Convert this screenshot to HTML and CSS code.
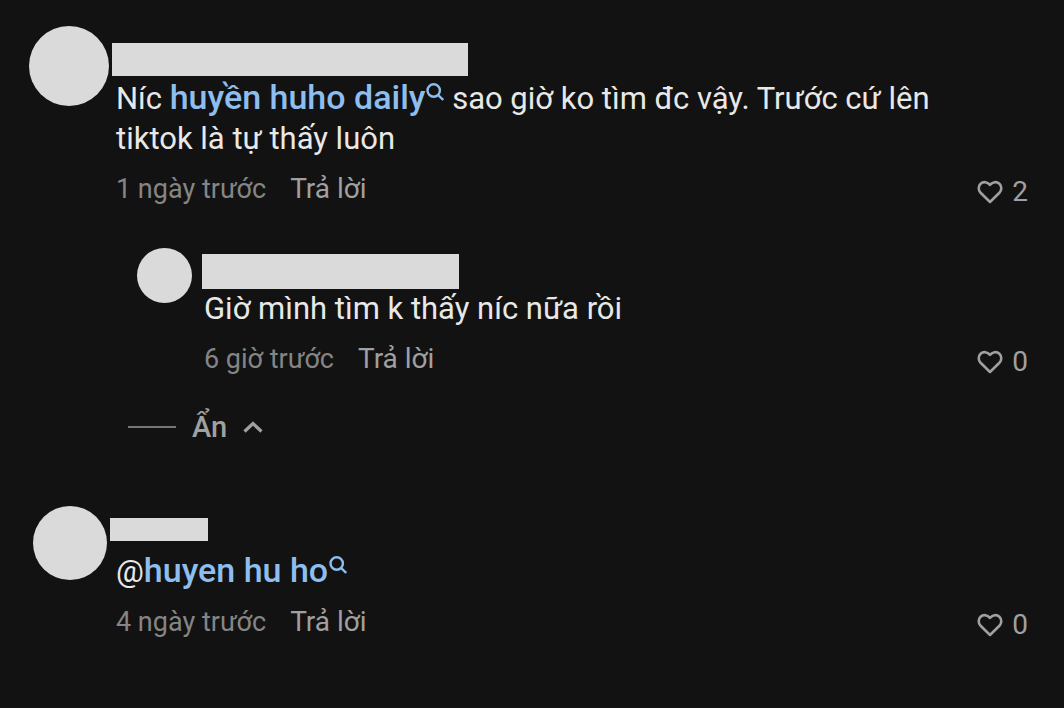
FILE: index.html
```html
<!DOCTYPE html>
<html lang="vi">
<head>
<meta charset="utf-8">
<meta name="viewport" content="width=device-width, initial-scale=1">
<title>Bình luận</title>
<link rel="stylesheet" href="styles.css">
</head>
<body>
<svg class="sprite" aria-hidden="true">
  <symbol id="search" viewBox="0 0 18 18">
    <circle cx="7.7" cy="7.5" r="6.2"/>
    <path d="M12.2 12.2 17.200 17"/>
  </symbol>
  <symbol id="heart" viewBox="0 0 26 24">
    <path d="M13 22 3.600 12.800C1.100 10.200 1.100 6.200 3.600 3.800 6.400 1.200 10.400 1.800 13 4.800 15.600 1.800 19.600 1.200 22.400 3.800c2.500 2.400 2.500 6.400 0 9Z"/>
  </symbol>
</svg>
<main class="comments">
  <article class="comment">
    <div class="avatar"></div>
    <div class="body">
      <div class="name name-long"></div>
      <p class="text">Níc <a class="keyword" href="#">huyền huho daily<svg class="search"><use href="#search"/></svg></a> sao giờ ko tìm đc vậy. Trước cứ lên tiktok là tự thấy luôn</p>
      <footer class="meta">
        <time>1 ngày trước</time>
        <button class="reply" type="button">Trả lời</button>
        <button class="like" type="button" aria-label="Thích, 2"><svg class="heart"><use href="#heart"/></svg><span>2</span></button>
      </footer>
    </div>
  </article>

  <section class="replies">
    <article class="comment comment-nested">
      <div class="avatar"></div>
      <div class="body">
        <div class="name name-medium"></div>
        <p class="text">Giờ mình tìm k thấy níc nữa rồi</p>
        <footer class="meta">
          <time>6 giờ trước</time>
          <button class="reply" type="button">Trả lời</button>
          <button class="like" type="button" aria-label="Thích, 0"><svg class="heart"><use href="#heart"/></svg><span>0</span></button>
        </footer>
      </div>
    </article>
    <button class="collapse" type="button"><span class="rule"></span><span>Ẩn</span><svg class="chevron" viewBox="0 0 20 12"><path d="M1.500 10.500 10 2.500l8.500 8"/></svg></button>
  </section>

  <article class="comment comment-short">
    <div class="avatar"></div>
    <div class="body">
      <div class="name name-short"></div>
      <p class="text">@<a class="keyword" href="#">huyen hu ho<svg class="search"><use href="#search"/></svg></a></p>
      <footer class="meta">
        <time>4 ngày trước</time>
        <button class="reply" type="button">Trả lời</button>
        <button class="like" type="button" aria-label="Thích, 0"><svg class="heart"><use href="#heart"/></svg><span>0</span></button>
      </footer>
    </div>
  </article>
</main>
</body>
</html>
```
FILE: styles.css
```css
* {
  box-sizing: border-box;
}

body {
  margin: 0;
  min-height: 100vh;
  background: #121212;
  color: #e8e8e8;
  font-family: Roboto, "Noto Sans", sans-serif;
  font-size: 31px;
  line-height: 40px;
}

button {
  padding: 0;
  border: 0;
  background: none;
  color: inherit;
  font: inherit;
  cursor: pointer;
}

svg {
  fill: none;
  stroke: currentColor;
}

.sprite {
  display: none;
}

.comments {
  padding: 26px 36px 40px 29px;
}

.comment {
  display: flex;
  gap: 3px;
}

.avatar {
  flex: none;
  width: 80px;
  height: 80px;
  border-radius: 50%;
  background: #dadada;
}

.body {
  flex: 1;
  min-width: 0;
  padding-top: 17px;
}

.name {
  height: 33px;
  background: #dadada;
}

.name-long {
  width: 356px;
}

.name-medium {
  width: 257px;
  height: 35px;
}

.name-short {
  width: 98px;
  height: 23px;
}

.text {
  margin: 3px 0 0;
  padding: 0 80px 0 4px;
}

.keyword {
  color: #8dbeef;
  font-size: 34px;
  font-weight: 500;
  line-height: 32px;
  text-decoration: none;
}

.search {
  width: 18px;
  height: 18px;
  margin-left: 1px;
  vertical-align: 8px;
  stroke-width: 2.4;
}

.meta {
  display: flex;
  align-items: center;
  margin-top: 7px;
  padding-left: 4px;
  color: #858585;
  font-size: 27px;
}

.reply {
  margin-left: 24px;
  color: #a0a0a0;
  font-size: 28px;
}

.like {
  display: flex;
  align-items: center;
  gap: 9px;
  margin-left: auto;
  padding-top: 6px;
  color: #a0a0a0;
  font-size: 28px;
}

.heart {
  width: 26px;
  height: 24px;
  stroke-width: 2.6;
  stroke-linejoin: round;
}

.replies {
  padding: 36px 0 0 108px;
}

.comment-nested {
  gap: 10px;
}

.comment-nested .avatar {
  width: 55px;
  height: 55px;
}

.comment-nested .body {
  padding-top: 6px;
}

.comment-nested .text {
  margin-top: 0;
  padding-left: 2px;
}

.comment-nested .meta {
  padding-left: 2px;
}

.collapse {
  display: flex;
  align-items: center;
  gap: 16px;
  margin: 25px 0 0 -9px;
  color: #a0a0a0;
  font-size: 29px;
  font-weight: 500;
}

.rule {
  width: 48px;
  height: 2px;
  background: #757575;
}

.chevron {
  width: 20px;
  height: 12px;
  stroke-width: 3.2;
}

.comment-short {
  padding: 59px 0 0 4px;
}

.comment-short .avatar {
  width: 74px;
  height: 74px;
}

.comment-short .body {
  padding-top: 12px;
}

.comment-short .text {
  margin-top: 11px;
  padding-left: 6px;
}

.comment-short .meta {
  padding-left: 6px;
}
```
